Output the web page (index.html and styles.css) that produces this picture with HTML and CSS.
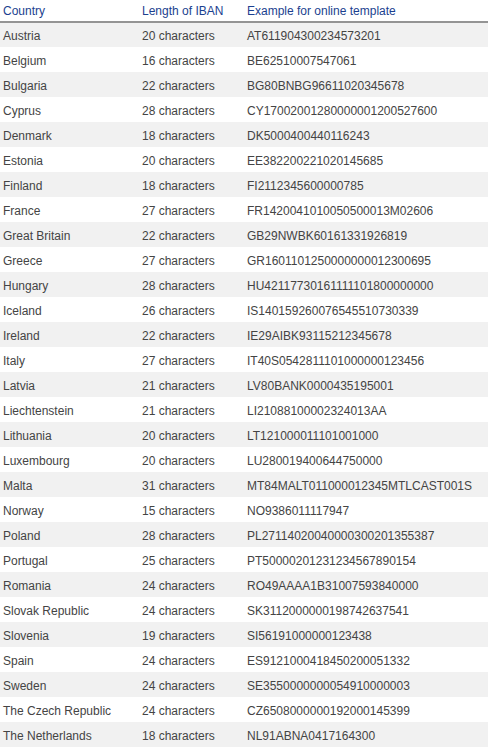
FILE: index.html
```html
<!DOCTYPE html>
<html>
<head>
<meta charset="utf-8">
<link rel="stylesheet" href="styles.css">
</head>
<body>
<table class="iban">
<thead>
<tr><th class="c1">Country</th><th class="c2">Length of IBAN</th><th class="c3">Example for online template</th></tr>
</thead>
<tbody>
<tr><td>Austria</td><td>20 characters</td><td>AT611904300234573201</td></tr>
<tr><td>Belgium</td><td>16 characters</td><td>BE62510007547061</td></tr>
<tr><td>Bulgaria</td><td>22 characters</td><td>BG80BNBG96611020345678</td></tr>
<tr><td>Cyprus</td><td>28 characters</td><td>CY17002001280000001200527600</td></tr>
<tr><td>Denmark</td><td>18 characters</td><td>DK5000400440116243</td></tr>
<tr><td>Estonia</td><td>20 characters</td><td>EE382200221020145685</td></tr>
<tr><td>Finland</td><td>18 characters</td><td>FI2112345600000785</td></tr>
<tr><td>France</td><td>27 characters</td><td>FR1420041010050500013M02606</td></tr>
<tr><td>Great Britain</td><td>22 characters</td><td>GB29NWBK60161331926819</td></tr>
<tr><td>Greece</td><td>27 characters</td><td>GR1601101250000000012300695</td></tr>
<tr><td>Hungary</td><td>28 characters</td><td>HU42117730161111101800000000</td></tr>
<tr><td>Iceland</td><td>26 characters</td><td>IS140159260076545510730339</td></tr>
<tr><td>Ireland</td><td>22 characters</td><td>IE29AIBK93115212345678</td></tr>
<tr><td>Italy</td><td>27 characters</td><td>IT40S0542811101000000123456</td></tr>
<tr><td>Latvia</td><td>21 characters</td><td>LV80BANK0000435195001</td></tr>
<tr><td>Liechtenstein</td><td>21 characters</td><td>LI21088100002324013AA</td></tr>
<tr><td>Lithuania</td><td>20 characters</td><td>LT121000011101001000</td></tr>
<tr><td>Luxembourg</td><td>20 characters</td><td>LU280019400644750000</td></tr>
<tr><td>Malta</td><td>31 characters</td><td>MT84MALT011000012345MTLCAST001S</td></tr>
<tr><td>Norway</td><td>15 characters</td><td>NO9386011117947</td></tr>
<tr><td>Poland</td><td>28 characters</td><td>PL27114020040000300201355387</td></tr>
<tr><td>Portugal</td><td>25 characters</td><td>PT50000201231234567890154</td></tr>
<tr><td>Romania</td><td>24 characters</td><td>RO49AAAA1B31007593840000</td></tr>
<tr><td>Slovak Republic</td><td>24 characters</td><td>SK3112000000198742637541</td></tr>
<tr><td>Slovenia</td><td>19 characters</td><td>SI56191000000123438</td></tr>
<tr><td>Spain</td><td>24 characters</td><td>ES9121000418450200051332</td></tr>
<tr><td>Sweden</td><td>24 characters</td><td>SE3550000000054910000003</td></tr>
<tr><td>The Czech Republic</td><td>24 characters</td><td>CZ6508000000192000145399</td></tr>
<tr><td>The Netherlands</td><td>18 characters</td><td>NL91ABNA0417164300</td></tr>
</tbody>
</table>
</body>
</html>
```

FILE: styles.css
```css
html, body {
  margin: 0;
  padding: 0;
  background: #ffffff;
}
.iban {
  width: 488px;
  border-collapse: collapse;
  font-family: "Liberation Sans", Arial, sans-serif;
  font-size: 12px;
  table-layout: fixed;
}
.iban th {
  height: 22px;
  padding: 0 0 0 3px;
  text-align: left;
  font-weight: normal;
  color: #1b3f8f;
  border-bottom: 2px solid #949494;
  vertical-align: middle;
  box-sizing: border-box;
}
.iban .c1 { width: 139px; }
.iban .c2 { width: 105px; }
.iban td {
  height: 25px;
  padding: 2px 0 0 3px;
  color: #444444;
  vertical-align: middle;
  white-space: nowrap;
  box-sizing: border-box;
}
.iban tbody tr:nth-child(odd) td {
  background: #f1f1f1;
}
```
